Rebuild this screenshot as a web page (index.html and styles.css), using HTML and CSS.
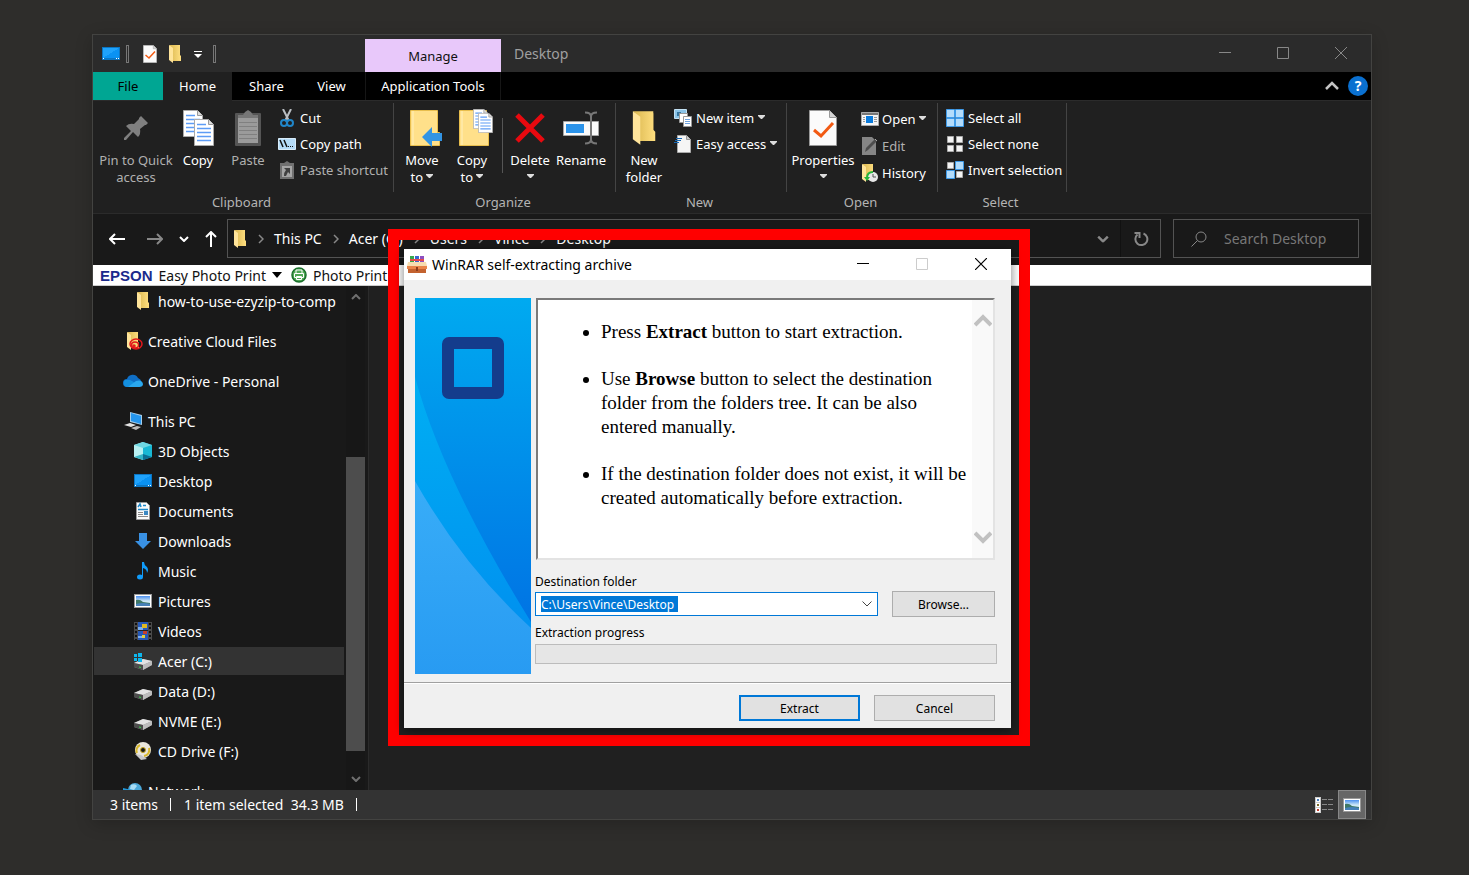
FILE: index.html
```
<!DOCTYPE html>
<html lang="en">

<head>
    <meta charset="utf-8">
    <title>Desktop</title>
    <link rel="stylesheet" href="styles.css">
</head>

<body>

    <!-- Shared icons -->
    <svg class="defs" width="0" height="0">
        <defs>
            <linearGradient id="g-folder" x1="0" y1="0" x2="1" y2="0"><stop offset="0" stop-color="#d9b64f"/><stop offset="1" stop-color="#ffdf80"/></linearGradient>
            <linearGradient id="g-desk" x1="0" y1="0" x2="1" y2="1"><stop offset=".5" stop-color="#1fa2fb"/><stop offset=".5" stop-color="#0a92f3"/></linearGradient>
            <linearGradient id="g-sfx" x1="0" y1="0" x2="0" y2="1"><stop offset="0" stop-color="#00aaf0"/><stop offset="1" stop-color="#006be2"/></linearGradient>
            <linearGradient id="g-sfx2" x1="0" y1="0" x2="0" y2="1"><stop offset="0" stop-color="#00aff3"/><stop offset="1" stop-color="#008bef"/></linearGradient>
            <linearGradient id="g-sfx3" x1="0" y1="0" x2="0" y2="1"><stop offset="0" stop-color="#38adf8"/><stop offset="1" stop-color="#289bf2"/></linearGradient>
            <linearGradient id="g-sky" x1="0" y1="0" x2="0" y2="1"><stop offset="0" stop-color="#4a8ff0"/><stop offset=".5" stop-color="#cfe8f6"/></linearGradient>
        </defs>
        <symbol id="folder" viewBox="0 0 14 18"><path d="M1 1h11v10h1v5H5z" fill="#eec763"/><path d="M1 0h11v10l1 1v5H4V3z" fill="url(#g-folder)"/><path d="M1 0l4 3v15l-4-3z" fill="#ffe49a"/></symbol>
        <symbol id="desktop" viewBox="0 0 18 14"><path d="M0 0h18v13H0z" fill="#0b76c4"/><path d="M1 1h16v10H1z" fill="url(#g-desk)"/><path d="M1 11h1v1H1zM14 11h1v1h-1zM16 11h1v1h-1z" fill="#fff"/></symbol>
        <symbol id="drive" viewBox="0 0 18 14"><path d="M0 7l9-4 9 2v4l-9 5-9-3z" fill="#8d8d8d"/><path d="M0 7l9-4 9 2-9 4z" fill="#e3e3e3"/><path d="M0 7l9 2v5l-9-3z" fill="#4c4c4c"/><path d="M9 9l9-4v4l-9 5z" fill="#bcbcbc"/><path d="M5 10.500l2 .5v1l-2-.5z" fill="#36d94a"/></symbol>
        <symbol id="picture" viewBox="0 0 18 14"><path d="M0 0h18v14H0z" fill="#9a9a9a"/><path d="M1 1h16v12H1z" fill="#fff"/><path d="M2 2h14v10H2z" fill="url(#g-sky)"/><path d="M2 6q4-1 7 2l7 1v3H2z" fill="#3f7867"/><path d="M2 10q7-2 14 0v2H2z" fill="#4680b8"/></symbol>
        <symbol id="caret" viewBox="0 0 7 4"><path d="M0 0h7v1L4 4H3L0 1z" fill="currentColor"/></symbol>
        <symbol id="chev" viewBox="0 0 10 6"><path d="M1 1l4 4 4-4" fill="none" stroke="currentColor" stroke-width="2"/></symbol>
        <symbol id="crumb" viewBox="0 0 6 10"><path d="M1 1l4 4-4 4" fill="none" stroke="currentColor" stroke-width="1.500"/></symbol>
        <symbol id="lines" viewBox="0 0 20 27"><path d="M.5.500h14l5 5v21H.5z" fill="#fff" stroke="#aaa"/><path d="M14.500.500v5h5" fill="#ddd" stroke="#999"/><path d="M3 5.500h9M3 9.500h14M3 13.500h14M3 17.500h14M3 21.500h14" stroke="#5d9cf5" stroke-width="1.500"/></symbol>
        <symbol id="check" viewBox="0 0 28 36"><path d="M.5.500h20l7 7v28H.5z" fill="#fbfbfb" stroke="#999"/><path d="M20.500.500v7h7" fill="#d4d4d4" stroke="#999"/><path d="M5 20l7 6 12-13" fill="none" stroke="#f25a13" stroke-width="3"/></symbol>
    </svg>

    <div class="window">

        <!-- Title bar -->
        <header class="titlebar">
            <div class="quick">
                <svg width="18" height="14"><use href="#desktop"/></svg>
                <span class="grip"></span>
                <svg class="quick-check" width="14" height="18"><use href="#check"/></svg>
                <svg width="14" height="18"><use href="#folder"/></svg>
                <svg class="quick-menu" width="8" height="8"><path d="M0 .500h8" stroke="#fff"/><path d="M0 3h8L4 7z" fill="#fff"/></svg>
                <span class="grip"></span>
            </div>
            <div class="manage">Manage</div>
            <div class="window-title">Desktop</div>
            <div class="window-buttons">
                <button aria-label="Minimize"><svg width="12" height="12"><path d="M0 5.500h12" stroke="#888"/></svg></button>
                <button aria-label="Maximize"><svg width="12" height="12"><path d="M.5.500h11v11H.5z" fill="none" stroke="#888"/></svg></button>
                <button aria-label="Close"><svg width="12" height="12"><path d="M0 0l12 12M12 0L0 12" stroke="#888"/></svg></button>
            </div>
        </header>

        <!-- Ribbon tabs -->
        <nav class="tabs">
            <button class="tab file">File</button>
            <button class="tab home">Home</button>
            <button class="tab share">Share</button>
            <button class="tab view">View</button>
            <button class="tab tools">Application Tools</button>
            <div class="tabs-end">
                <button aria-label="Collapse ribbon"><svg width="14" height="10"><path d="M1 8l6-6 6 6" fill="none" stroke="#c4c4c4" stroke-width="2.500"/></svg></button>
                <button class="help">?</button>
            </div>
        </nav>

        <!-- Ribbon -->
        <div class="ribbon">
            <section class="group clipboard">
                <div class="group-items">
                    <button class="big pin off">
                        <span class="big-icon"><svg width="24" height="24"><path d="M17 0l7 7-2 2h-1l-5 4q1 5-2 8l-5-5-7 8H0v-2l7-7-5-5q3-3 8-2l5-5V2z" fill="#7f7f7f"/></svg></span>
                        Pin to Quick<br>access
                    </button>
                    <button class="big">
                        <span class="big-icon"><svg width="31" height="36"><use href="#lines" width="20" height="27"/><use href="#lines" x="11" y="9" width="20" height="27"/></svg></span>
                        Copy
                    </button>
                    <button class="big off">
                        <span class="big-icon"><svg width="26" height="36"><rect y="3" width="26" height="33" rx="1" fill="#555"/><path d="M3 7h20v26H3z" fill="#9b9b9b"/><path d="M4 12.500h18M4 16.500h18M4 20.500h18M4 24.500h18M4 28.500h18" stroke="#808080"/><path d="M3 8V5h5l2-3 3-2 3 2 2 3h5v3z" fill="#777"/></svg></span>
                        Paste
                    </button>
                    <div class="small-list">
                        <button class="small"><svg width="18" height="18"><path d="M5 0l6 12M13 0L7 12" stroke="#b9bec3" stroke-width="2"/><circle cx="6" cy="14" r="3" fill="none" stroke="#2086c9" stroke-width="2"/><circle cx="12" cy="14" r="3" fill="none" stroke="#2086c9" stroke-width="2"/></svg>Cut</button>
                        <button class="small"><svg width="18" height="12"><path d="M.5.500h17v11H.5z" fill="#b5dcf8" stroke="#d8ecfa"/><path d="M2 2l3 7M6 2l3 7" stroke="#111" stroke-width="1.500"/><path d="M10 8h1v1h-1zM12 8h1v1h-1zM14 8h1v1h-1z" fill="#111"/></svg>Copy path</button>
                        <button class="small off"><svg width="18" height="18"><path d="M2 2h4l3-2 3 2h4v16H2z" fill="#707070"/><path d="M4 5h10v11H4z" fill="#a5a5a5"/><path d="M6 7h6v6l-2-2-2 4H6q0-4 2-6z" fill="#404040"/></svg>Paste shortcut</button>
                    </div>
                </div>
                <div class="group-name">Clipboard</div>
            </section>

            <section class="group organize">
                <div class="group-items">
                    <button class="big">
                        <span class="big-icon"><svg width="40" height="38" viewBox="-6 0 40 38"><path d="M2.500 1.500h27v22h2v13h-29z" fill="#ffe08a" stroke="#e8be4d"/><path d="M5 2v34" stroke="#fff0bd"/><path d="M14 28l10-10v6h10v8H24v6z" fill="#3294e4"/></svg></span>
                        Move<br>to <svg class="caret" width="7" height="4"><use href="#caret"/></svg>
                    </button>
                    <button class="big">
                        <span class="big-icon"><svg width="42" height="38" viewBox="-8 0 42 38"><path d="M.5 1.500h27v22h2v13H.5z" fill="#ffe08a" stroke="#e8be4d"/><path d="M3 2v34" stroke="#fff0bd"/><use href="#lines" x="14" y="0" width="15" height="20"/><use href="#lines" x="19" y="4" width="15" height="20"/></svg></span>
                        Copy<br>to <svg class="caret" width="7" height="4"><use href="#caret"/></svg>
                    </button>
                    <span class="divider"></span>
                    <button class="big">
                        <span class="big-icon"><svg width="30" height="30"><path d="M2 2l26 26M28 2L2 28" stroke="#e8090f" stroke-width="5"/></svg></span>
                        Delete<br><svg class="caret" width="7" height="4"><use href="#caret"/></svg>
                    </button>
                    <button class="big wide">
                        <span class="big-icon"><svg width="36" height="34"><path d="M.5 10.500h35v14H.5z" fill="#fafafa" stroke="#a5a5a5"/><path d="M3 13h18v9H3z" fill="#2b93ea"/><path d="M22 1.500q6 0 6 4v23q0 4-6 4M34 1.500q-6 0-6 4v23q0 4 6 4" fill="none" stroke="#777" stroke-width="2"/></svg></span>
                        Rename
                    </button>
                </div>
                <div class="group-name">Organize</div>
            </section>

            <section class="group new">
                <div class="group-items">
                    <button class="big">
                        <span class="big-icon"><svg width="26" height="36"><use href="#folder"/></svg></span>
                        New<br>folder
                    </button>
                    <div class="small-list">
                        <button class="small"><svg width="18" height="18"><path d="M.5.500h12v9H.5z" fill="#8bc4e8" stroke="#c3e1f3"/><path d="M3 3h4v4H3z" fill="#35759f"/><path d="M5.500 4.500h8v9h-8z" fill="#fff" stroke="#999"/><path d="M9.500 7.500h8v10h-8z" fill="#fff" stroke="#999"/><path d="M11 10.500h5M11 12.500h5M11 14.500h5" stroke="#6fa3df"/></svg>New item<svg class="caret" width="7" height="4"><use href="#caret"/></svg></button>
                        <button class="small"><svg width="18" height="18"><path d="M3.500.500h9l4 4v13h-13z" fill="#f5f5f5" stroke="#aaa"/><path d="M12.500.500v4h4" fill="#ccc" stroke="#999"/><path d="M2 3.500h6M1 5.500h6M0 7.500h5" stroke="#1769b5"/></svg>Easy access<svg class="caret" width="7" height="4"><use href="#caret"/></svg></button>
                    </div>
                </div>
                <div class="group-name">New</div>
            </section>

            <section class="group open">
                <div class="group-items">
                    <button class="big wider">
                        <span class="big-icon"><svg width="28" height="36"><use href="#check"/></svg></span>
                        Properties<br><svg class="caret" width="7" height="4"><use href="#caret"/></svg>
                    </button>
                    <div class="small-list loose">
                        <button class="small"><svg width="18" height="14"><path d="M.5.500h17v13H.5z" fill="#f5f5f5" stroke="#aaa"/><path d="M1 1h16v2H1z" fill="#777"/><path d="M5 4h7v7H5z" fill="#0b7bdc"/><path d="M2 5.500h2M2 7.500h2M2 9.500h2M13 5.500h3M13 7.500h3M13 9.500h3" stroke="#999"/></svg>Open<svg class="caret" width="7" height="4"><use href="#caret"/></svg></button>
                        <button class="small off"><svg width="18" height="18"><path d="M1 0h10l4 4v14H1z" fill="#858585"/><path d="M4 15l1-4L14 2l2 2-9 9z" fill="#4d4d4d"/><path d="M14 2l2 2" stroke="#aaa"/></svg>Edit</button>
                        <button class="small"><svg width="18" height="18"><use href="#folder" width="14" height="18"/><circle cx="12" cy="13" r="5" fill="#e8e8e8"/><path d="M12 10v3h3" fill="none" stroke="#555"/><path d="M12 8q-6 0-6 6" fill="none" stroke="#25b33d" stroke-width="2"/><path d="M3 13h6l-3 4z" fill="#25b33d"/></svg>History</button>
                    </div>
                </div>
                <div class="group-name">Open</div>
            </section>

            <section class="group select">
                <div class="group-items">
                    <div class="small-list">
                        <button class="small"><svg width="18" height="18"><g fill="#b3dcfb" stroke="#3e9ae8"><path d="M.5.500h8v8h-8zM9.500.500h8v8h-8zM.5 9.500h8v8h-8zM9.500 9.500h8v8h-8z"/></g></svg>Select all</button>
                        <button class="small"><svg width="18" height="18"><g fill="#f4f4f4" stroke="#aaa"><path d="M1.500 1.500h6v6h-6zM10.500 1.500h6v6h-6zM1.500 10.500h6v6h-6zM10.500 10.500h6v6h-6z"/></g></svg>Select none</button>
                        <button class="small"><svg width="18" height="18"><path d="M1.500 1.500h6v6h-6zM10.500 10.500h6v6h-6z" fill="#f4f4f4" stroke="#aaa"/><path d="M9.500.500h8v8h-8zM.5 9.500h8v8h-8z" fill="#b3dcfb" stroke="#3e9ae8"/></svg>Invert selection</button>
                    </div>
                </div>
                <div class="group-name">Select</div>
            </section>
        </div>

        <!-- Address bar -->
        <div class="navbar">
            <div class="arrows">
                <button aria-label="Back"><svg width="16" height="12"><path d="M16 6H1M6 1L1 6l5 5" fill="none" stroke="#fff" stroke-width="2"/></svg></button>
                <button aria-label="Forward"><svg width="16" height="12"><path d="M0 6h15M10 1l5 5-5 5" fill="none" stroke="#888" stroke-width="2"/></svg></button>
                <button class="recent" aria-label="Recent"><svg width="10" height="6"><use href="#chev"/></svg></button>
                <button class="up" aria-label="Up"><svg width="12" height="16"><path d="M6 16V1M1 6l5-5 5 5" fill="none" stroke="#fff" stroke-width="2"/></svg></button>
            </div>
            <div class="address">
                <svg width="14" height="18"><use href="#folder"/></svg>
                <svg class="crumb" width="6" height="10"><use href="#crumb"/></svg><a href="#">This PC</a>
                <svg class="crumb" width="6" height="10"><use href="#crumb"/></svg><a href="#">Acer (C:)</a>
                <svg class="crumb" width="6" height="10"><use href="#crumb"/></svg><a href="#">Users</a>
                <svg class="crumb" width="6" height="10"><use href="#crumb"/></svg><a href="#">Vince</a>
                <svg class="crumb" width="6" height="10"><use href="#crumb"/></svg><a href="#">Desktop</a>
                <button class="history" aria-label="Previous locations"><svg width="12" height="8" viewBox="0 0 10 6"><use href="#chev"/></svg></button>
                <button class="refresh" aria-label="Refresh"><svg width="16" height="16"><path d="M10.500 2.500a6 6 0 1 1-6 1" fill="none" stroke="#888" stroke-width="2"/><path d="M1.500 2h5v5" fill="none" stroke="#888" stroke-width="2"/></svg></button>
            </div>
            <div class="search">
                <svg width="16" height="16"><circle cx="10" cy="6" r="5" fill="none" stroke="#888"/><path d="M6.500 9.500L.5 15.500" stroke="#888"/></svg>
                <input type="text" placeholder="Search Desktop" aria-label="Search Desktop">
            </div>
        </div>

        <div class="epson">
            <strong>EPSON</strong>
            <button>Easy Photo Print</button>
            <svg class="epson-menu" width="10" height="6"><path d="M0 0h10L5 6z" fill="#000"/></svg>
            <svg width="16" height="16"><circle cx="8" cy="8" r="7" fill="#51a856" stroke="#19702a" stroke-width="1.500"/><path d="M5 6V3h6v3M3.500 6.500h9v4h-9zM5.500 9.500h5v3h-5z" fill="none" stroke="#fff"/></svg>
            <button>Photo Print</button>
        </div>

        <div class="content">
            <!-- Folder tree -->
            <aside class="sidebar">
                <ul class="tree">
                    <li class="sub"><svg width="18" height="18"><use href="#folder"/></svg>how-to-use-ezyzip-to-comp</li>
                    <li class="top"><svg width="20" height="18"><use href="#folder" x="3" width="14" height="18"/><g fill="none" stroke="#e3171b" stroke-width="1.500"><ellipse cx="13" cy="12" rx="6" ry="5"/><ellipse cx="12" cy="13" rx="3.500" ry="3"/><circle cx="11" cy="14" r="1"/></g></svg>Creative Cloud Files</li>
                    <li class="top"><svg width="20" height="14"><path d="M4 13a4 4 0 0 1 0-8 6 6 0 0 1 11-1 5 5 0 0 1 1 9z" fill="#0f6fc6"/><path d="M4 13a4 4 0 0 1-2-7q4-1 7 1l8 5-1 1z" fill="#1490df"/><path d="M5 13l8-6q6-2 7 3 0 3-4 3z" fill="#2aa8ef"/></svg>OneDrive - Personal</li>
                    <li class="top"><svg width="20" height="18"><path d="M7 0l12 3v10L7 10z" fill="#a4cce9"/><path d="M8 1l10 3v8L8 9z" fill="#2496ee"/><path d="M1 13l6-2 6 2-5 2z" fill="#e3e3e3"/><path d="M8 16l6-2 4 1-5 3z" fill="#bcbcbc"/></svg>This PC</li>
                    <li class="sub"><svg width="18" height="18"><path d="M0 3l9-3v18l-9-3z" fill="#b8f0f2"/><path d="M9 0l9 3v12l-9 3z" fill="#19b8d4"/><path d="M0 3l9-3 9 3-9 3z" fill="#6fd7e2"/><path d="M9 12l9 3-9 3z" fill="#0b6f94"/><path d="M0 15l9-3v6z" fill="#35b4c6"/></svg>3D Objects</li>
                    <li class="sub"><svg width="18" height="14"><use href="#desktop"/></svg>Desktop</li>
                    <li class="sub"><svg width="18" height="18"><path d="M2.500.500h10l3 3v14h-13z" fill="#fafafa" stroke="#999"/><path d="M4 5l2-3 1 3M9 3.500h3M4 7.500h10" fill="none" stroke="#1b88c9" stroke-width="1.500"/><path d="M4 10.500h5M4 12.500h5M4 14.500h10" stroke="#888"/><path d="M10 9h4v4h-4z" fill="#3b88c2"/></svg>Documents</li>
                    <li class="sub"><svg width="18" height="18"><path d="M5 1h8v8h4l-8 8-8-8h4z" fill="#3991e4"/></svg>Downloads</li>
                    <li class="sub"><svg width="18" height="18"><ellipse cx="6" cy="15" rx="3" ry="2.500" fill="#0f9bfa"/><path d="M8 0h2q0 3 3 5 2 3 0 6 0-4-4-5v9H8z" fill="#0f9bfa"/></svg>Music</li>
                    <li class="sub"><svg width="18" height="14"><use href="#picture"/></svg>Pictures</li>
                    <li class="sub"><svg width="18" height="18"><path d="M0 0h18v18H0z" fill="#4a4a4a"/><path d="M4 0h10v18H4z" fill="#2659b8"/><path d="M4 5h5v3H4zM4 14h5v2H4z" fill="#78aef0"/><path d="M8 2h5v4H8z" fill="#dfb923"/><path d="M9 8h4v4H9z" fill="#c6402c"/><path d="M8 13h3v3H8z" fill="#e5cf36"/><path d="M4 8.500h10" stroke="#222"/><path d="M2 1v17M16 1v17" stroke="#111" stroke-width="2" stroke-dasharray="2 2"/></svg>Videos</li>
                    <li class="sub selected"><svg width="18" height="18"><use href="#drive" y="4" width="18" height="14"/><path d="M0 2h3v3H0zM4 1h4v4H4zM0 6h3v3H0zM4 6h4v4H4z" fill="#0db7ee"/></svg>Acer (C:)</li>
                    <li class="sub"><svg width="18" height="18"><use href="#drive" y="4" width="18" height="14"/></svg>Data (D:)</li>
                    <li class="sub"><svg width="18" height="18"><use href="#drive" y="4" width="18" height="14"/></svg>NVME (E:)</li>
                    <li class="sub"><svg width="18" height="18"><circle cx="9" cy="8" r="8" fill="#e9e6dc"/><path d="M3 11A6 6 0 0 1 6 3M15 6a6 6 0 0 1-5 8" fill="none" stroke="#d8b72b" stroke-width="2"/><circle cx="9" cy="8" r="2.500" fill="#191919" stroke="#c9a81d"/><path d="M1 12l6 1 6 4-6 1z" fill="#c9c9c9"/></svg>CD Drive (F:)</li>
                    <li class="top"><svg width="20" height="18"><circle cx="12" cy="8" r="7" fill="#4ba7d8"/><path d="M8 3q4-2 6 1l-3 4-4-1z" fill="#a8dcf4"/><path d="M0 6l9 2v8l-9-3z" fill="#2196d8"/></svg>Network</li>
                </ul>
                <div class="scrollbar">
                    <svg class="flip" width="10" height="6"><use href="#chev"/></svg>
                    <span class="thumb"></span>
                    <svg width="10" height="6"><use href="#chev"/></svg>
                </div>
            </aside>
            <main class="files"></main>
        </div>

        <!-- Status bar -->
        <footer class="status">
            <span class="cell">3 items</span>
            <span class="cell">1 item selected&nbsp; 34.3 MB</span>
            <div class="views">
                <button aria-label="Details"><svg width="18" height="16"><path d="M0 0h6v16H0z" fill="#ccc"/><path d="M1 1h4v4H1zM1 6h4v4H1zM1 11h4v4H1z" fill="#fff"/><path d="M2 2h2v2H2z" fill="#4a7fc0"/><path d="M2 7h2v2H2z" fill="#7b6b2a"/><path d="M2 12h2v2H2z" fill="#c23b2a"/><path d="M7 2.500h5M13 2.500h5M7 7.500h5M13 7.500h5M7 12.500h5M13 12.500h5" stroke="#888"/></svg></button>
                <button class="active" aria-label="Large icons"><svg width="18" height="14"><use href="#picture"/></svg></button>
            </div>
        </footer>

        <!-- Extraction dialog with its red outline -->
        <div class="outline">
            <div class="dialog" role="dialog" aria-label="WinRAR self-extracting archive">
                <div class="dialog-title">
                    <svg width="20" height="18"><path d="M3 0h4v7H3z" fill="#35a84b"/><path d="M8 0h4v7H8z" fill="#3965d0"/><path d="M13 0h4v7h-4z" fill="#8d4fc0"/><path d="M3 3h14v2H3z" fill="#e54b4b"/><path d="M1 9h18v8H1z" fill="#c3622f"/><path d="M1 6h18l1 4H0z" fill="#f7ddb0"/><path d="M0 10h20v3H0z" fill="#e9854a"/><path d="M9 11h2v4H9z" fill="#8a3d1d"/></svg>
                    <span>WinRAR self-extracting archive</span>
                    <div class="dialog-buttons">
                        <button aria-label="Minimize"><svg width="12" height="12"><path d="M0 5.500h12" stroke="#000"/></svg></button>
                        <button aria-label="Maximize" disabled><svg width="12" height="12"><path d="M.5.500h11v11H.5z" fill="none" stroke="#ccc"/></svg></button>
                        <button aria-label="Close"><svg width="12" height="12"><path d="M0 0l12 12M12 0L0 12" stroke="#000" stroke-width="1.200"/></svg></button>
                    </div>
                </div>
                <div class="dialog-body">
                    <svg class="banner" width="116" height="376" viewBox="0 0 116 376">
                        <path d="M0 0h116v376H0z" fill="url(#g-sfx)"/>
                        <path d="M0 79Q28 182 116 324v52H0z" fill="url(#g-sfx2)"/>
                        <path d="M0 183Q48 268 116 330v46H0z" fill="url(#g-sfx3)"/>
                        <rect x="33" y="45" width="50" height="50" rx="1" fill="none" stroke="#143c8c" stroke-width="12" stroke-linejoin="round"/>
                    </svg>
                    <form class="form">
                        <div class="notes">
                            <ul>
                                <li>Press <b>Extract</b> button to start extraction.</li>
                                <li>Use <b>Browse</b> button to select the destination folder from the folders tree. It can be also entered manually.</li>
                                <li>If the destination folder does not exist, it will be created automatically before extraction.</li>
                            </ul>
                            <div class="notes-scroll">
                                <svg class="flip" width="18" height="13"><path d="M1 2l8 8 8-8" fill="none" stroke="#c1c1c1" stroke-width="4"/></svg>
                                <svg width="18" height="13"><path d="M1 2l8 8 8-8" fill="none" stroke="#c1c1c1" stroke-width="4"/></svg>
                            </div>
                        </div>
                        <label for="destination">Destination folder</label>
                        <div class="destination">
                            <div class="combo">
                                <input type="text" id="destination" value="C:\Users\Vince\Desktop">
                                <svg width="10" height="6"><path d="M.5.500L5 5l4.500-4.500" fill="none" stroke="#444"/></svg>
                            </div>
                            <button type="button" class="push">Browse...</button>
                        </div>
                        <label for="progress">Extraction progress</label>
                        <progress id="progress" value="0" max="100"></progress>
                    </form>
                </div>
                <div class="dialog-footer">
                    <button type="button" class="push default">Extract</button>
                    <button type="button" class="push">Cancel</button>
                </div>
            </div>
        </div>
    </div>

</body>

</html>
```
FILE: styles.css
```
* {
    box-sizing: border-box;
}

body {
    display: flex;
    height: 100vh;
    margin: 0;
    padding: 34px 97px 55px 92px;
    background-color: #2e2d2b;
    color: #fff;
    font-family: "Noto Sans", "Open Sans", sans-serif;
    font-size: 14px;
}

svg {
    display: block;
    flex: none;
}

button {
    padding: 0;
    border: 0;
    background: none;
    color: inherit;
    font: inherit;
}

ul {
    margin: 0;
    padding: 0;
}

.defs {
    position: absolute;
}

.flip {
    transform: rotate(180deg);
}

.window {
    position: relative;
    display: flex;
    flex: 1;
    flex-direction: column;
    min-width: 0;
    border: 1px solid #434341;
    background-color: #202020;
    box-shadow: 0 4px 16px rgba(0, 0, 0, 0.2);
}

/* Title bar */
.titlebar {
    display: flex;
    flex: none;
    height: 37px;
    background-color: #2b2b2b;
}

.quick {
    display: flex;
    align-items: center;
    width: 272px;
    padding-left: 9px;
}

.grip {
    width: 3px;
    height: 18px;
    margin-left: 6px;
    border: 1px solid #777;
}

.quick-check {
    margin-left: 14px;
    margin-right: 11px;
}

.quick-menu {
    margin: 2px 5px 0 12px;
}

.manage {
    width: 136px;
    margin-top: 4px;
    background-color: #e8c8fa;
    color: #111;
    font-size: 13px;
    line-height: 34px;
    text-align: center;
}

.window-title {
    padding-left: 13px;
    color: #a0a0a0;
    line-height: 37px;
}

.window-buttons {
    display: flex;
    margin-left: auto;
    padding: 0 1px 2px 0;
}

.window-buttons button {
    display: grid;
    place-items: center;
    width: 58px;
}

/* Tabs */
.tabs {
    display: flex;
    flex: none;
    height: 29px;
    border-bottom: 1px solid #2b2b2b;
    background-color: #000;
    font-size: 13px;
}

.tab.file {
    width: 70px;
    background-color: #00a693;
    color: #000;
}

.tab.home {
    width: 69px;
    margin-bottom: -1px;
    padding-bottom: 2px;
    background-color: #202020;
}

.tab.share {
    width: 69px;
}

.tab.view {
    width: 61px;
    margin-right: 3px;
}

.tab.tools {
    width: 136px;
    border: solid #161616;
    border-width: 0 1px;
}

.tabs-end {
    display: flex;
    align-items: center;
    gap: 9px;
    margin-left: auto;
    padding-right: 3px;
}

.help {
    width: 20px;
    height: 20px;
    border-radius: 50%;
    background-color: #0a70d0;
    font-size: 14px;
    font-weight: bold;
    line-height: 20px;
}

/* Ribbon */
.ribbon {
    display: flex;
    flex: none;
    height: 113px;
    border-bottom: 1px solid #2b2b2b;
    font-size: 13px;
    white-space: nowrap;
}

.group {
    display: flex;
    flex-direction: column;
    padding-top: 2px;
}

.group-items {
    display: flex;
    height: 89px;
    padding: 2px 3px 0;
    border-right: 1px solid #444;
}

.group-name {
    padding-right: 4px;
    color: #b4b4b4;
    line-height: 20px;
    text-align: center;
}

.clipboard {
    width: 301px;
}

.clipboard .group-items {
    padding-left: 6px;
}

.organize {
    width: 222px;
}

.new {
    width: 171px;
}

.open {
    width: 151px;
}

.select {
    width: 129px;
}

.big {
    display: block;
    width: 50px;
    line-height: 17px;
    text-align: center;
    align-self: flex-start;
}

.big.pin {
    width: 74px;
}

.big.wide {
    width: 52px;
}

.big.wider {
    width: 66px;
}

.big-icon {
    display: grid;
    place-items: center;
    height: 47px;
    padding-bottom: 2px;
}

.off {
    color: #b0b0b0;
}

.caret {
    display: inline-block;
    color: #ddd;
    vertical-align: 4px;
}

.small .caret {
    margin-bottom: 2px;
}

.divider {
    width: 1px;
    height: 55px;
    margin: 13px 2px 0 5px;
    background-color: #555;
}

.small-list {
    display: flex;
    flex-direction: column;
    padding-left: 5px;
}

.small {
    display: flex;
    align-items: center;
    gap: 4px;
    height: 26px;
}

.loose .small {
    gap: 3px;
    height: 27px;
}

/* Address bar */
.navbar {
    display: flex;
    flex: none;
    height: 51px;
    padding: 5px 12px 7px 0;
    background-color: #191919;
}

.arrows {
    display: flex;
    align-items: center;
    width: 134px;
    padding-left: 16px;
}

.arrows button + button {
    margin-left: 22px;
}

.arrows button.recent,
.arrows button.up {
    margin-left: 16px;
}

.address {
    display: flex;
    flex: 1;
    align-items: center;
    margin-right: 12px;
    padding-left: 5px;
    border: 1px solid #535353;
}

.address a {
    color: #fff;
    text-decoration: none;
}

.crumb {
    margin: 0 10px 0 11px;
    color: #888;
}

.address .history {
    display: grid;
    place-items: center;
    width: 36px;
    height: 100%;
    margin-left: auto;
    border-right: 1px solid #111;
    color: #888;
}

.address .refresh {
    display: grid;
    place-items: center;
    width: 39px;
}

.search {
    display: flex;
    align-items: center;
    gap: 17px;
    width: 186px;
    padding-left: 17px;
    border: 1px solid #535353;
}

.search input {
    width: 120px;
    padding: 0;
    border: 0;
    background: none;
    color: #fff;
    font: inherit;
}

.search input::placeholder {
    color: #777;
}

/* Epson toolbar */
.epson {
    display: flex;
    flex: none;
    align-items: center;
    gap: 6px;
    height: 21px;
    padding-left: 7px;
    border-bottom: 1px solid #ccc;
    background-color: #fff;
    color: #111;
}

.epson strong {
    color: #1b2a8c;
    font-family: "Liberation Sans", Arial, sans-serif;
    font-size: 15px;
}

.epson-menu {
    margin-right: 3px;
}

/* Folder tree */
.content {
    display: flex;
    flex: 1;
    min-height: 0;
}

.sidebar {
    display: flex;
    width: 276px;
    overflow: hidden;
    border-right: 1px solid #2b2b2b;
    background-color: #191919;
}

.tree {
    flex: 1;
    min-width: 0;
    padding: 1px 0 0 1px;
    list-style: none;
}

.tree li {
    display: flex;
    align-items: center;
    gap: 6px;
    height: 28px;
    margin-bottom: 2px;
    padding-left: 40px;
    overflow: hidden;
    white-space: nowrap;
}

.tree li.top {
    gap: 5px;
    margin-top: 12px;
    padding-left: 29px;
}

.tree li.selected {
    background-color: #333;
}

.scrollbar {
    display: flex;
    flex-direction: column;
    align-items: center;
    width: 19px;
    margin: 0 3px 0 2px;
    padding: 8px 0;
    background-color: #171717;
    color: #6f6f6f;
}

.thumb {
    flex: 1;
    width: 100%;
    margin: 157px 0 25px;
    background-color: #4d4d4d;
}

.files {
    flex: 1;
}

/* Status bar */
.status {
    display: flex;
    flex: none;
    align-items: center;
    height: 29px;
    padding: 0 5px 0 17px;
    background-color: #333;
}

.cell {
    margin-right: 13px;
    padding-right: 12px;
    border-right: 1px solid #fff;
    line-height: 13px;
}

.views {
    display: flex;
    margin-left: auto;
}

.views button {
    display: grid;
    place-items: center;
    width: 28px;
    height: 29px;
}

.views .active {
    border: 1px solid #888;
    background-color: #666;
}

/* Extraction dialog */
.outline {
    position: absolute;
    top: 194px;
    left: 295px;
    width: 642px;
    padding: 9px 8px 7px 5px;
    border: 11px solid #f00;
}

.dialog {
    background-color: #f0f0f0;
    box-shadow: 0 2px 10px rgba(0, 0, 0, 0.5);
    color: #000;
    font-size: 12px;
}

.dialog-title {
    display: flex;
    align-items: center;
    gap: 5px;
    height: 31px;
    padding-left: 3px;
    background-color: #fff;
    font-size: 14px;
}

.dialog-buttons {
    display: flex;
    margin-left: auto;
    padding: 0 1px 1px 0;
}

.dialog-buttons button {
    display: grid;
    place-items: center;
    width: 59px;
    height: 30px;
}

.dialog-body {
    display: flex;
    gap: 4px;
    padding: 18px 14px 8px 11px;
    border-bottom: 1px solid #a0a0a0;
}

.form {
    flex: 1;
}

.notes {
    display: flex;
    height: 262px;
    margin: 0 2px 14px 1px;
    border: 2px solid;
    border-color: #7a7a7a #e3e3e3 #e3e3e3 #7a7a7a;
    background-color: #fff;
    font-family: "Liberation Serif", "Times New Roman", serif;
    font-size: 19px;
    line-height: 24px;
}

.notes ul {
    flex: 1;
    padding: 20px 0 0 63px;
}

.notes li {
    margin-bottom: 23px;
}

.notes-scroll {
    display: flex;
    flex-direction: column;
    justify-content: space-between;
    width: 21px;
    padding: 14px 2px;
    background-color: #f9f9f9;
}

.form label {
    display: block;
    line-height: 16px;
}

.destination {
    display: flex;
    gap: 14px;
    align-items: center;
    margin: 1px 2px 8px 0;
}

.combo {
    display: flex;
    flex: 1;
    align-items: center;
    justify-content: space-between;
    height: 24px;
    padding: 0 5px;
    border: 1px solid #0078d7;
    background-color: #fff;
}

.combo input {
    width: 137px;
    height: 16px;
    padding: 0;
    border: 0;
    background-color: #0078d7;
    color: #fff;
    font: inherit;
}

.push {
    width: 121px;
    height: 26px;
    border: 1px solid #adadad;
    background-color: #e1e1e1;
}

.destination .push {
    width: 103px;
}

.push.default {
    border: 2px solid #0078d7;
}

progress {
    display: block;
    width: 100%;
    height: 20px;
    margin-top: 3px;
    border: 1px solid #bcbcbc;
    background-color: #e6e6e6;
    appearance: none;
}

progress::-webkit-progress-bar {
    background-color: #e6e6e6;
}

.dialog-footer {
    display: flex;
    justify-content: flex-end;
    gap: 14px;
    padding: 11px 16px 7px;
    border-top: 1px solid #fff;
}
```
